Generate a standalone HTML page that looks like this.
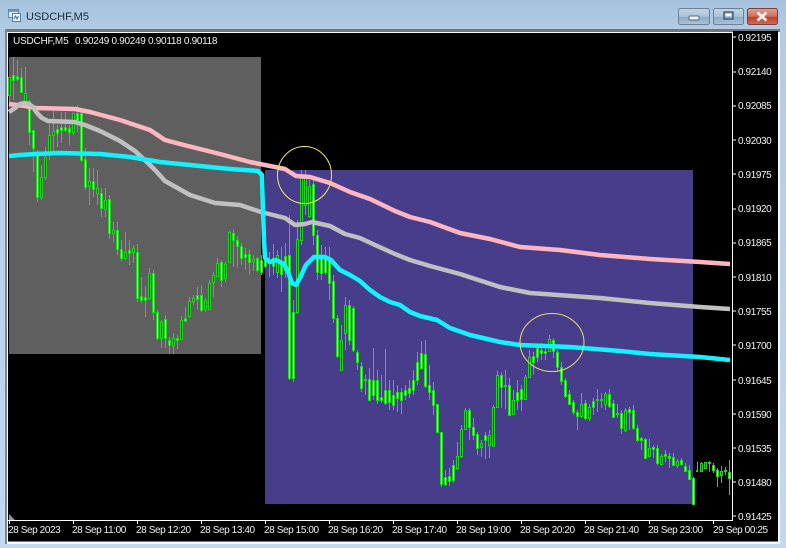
<!DOCTYPE html>
<html><head><meta charset="utf-8"><title>USDCHF,M5</title>
<style>
html,body{margin:0;padding:0;width:786px;height:548px;overflow:hidden;background:#bcd4ec}
svg{position:absolute;left:0;top:0;display:block}
text{font-family:"Liberation Sans",sans-serif}
</style></head><body>
<svg width="786" height="548" viewBox="0 0 786 548" xmlns="http://www.w3.org/2000/svg">
<defs>
<linearGradient id="bg" x1="0" y1="0" x2="0" y2="1"><stop offset="0" stop-color="#a5c2dd"/><stop offset=".06" stop-color="#b3cce4"/><stop offset="1" stop-color="#c2d9ef"/></linearGradient>
<linearGradient id="btn" x1="0" y1="0" x2="0" y2="1"><stop offset="0" stop-color="#c3d5e6"/><stop offset=".5" stop-color="#aac3da"/><stop offset=".55" stop-color="#8fabc6"/><stop offset="1" stop-color="#a9c3db"/></linearGradient>
<linearGradient id="cls" x1="0" y1="0" x2="0" y2="1"><stop offset="0" stop-color="#e0a193"/><stop offset=".5" stop-color="#cf6c59"/><stop offset=".55" stop-color="#bb3e2b"/><stop offset="1" stop-color="#cf6f5c"/></linearGradient>
</defs>
<rect width="786" height="548" fill="url(#bg)"/>
<!-- title icon -->
<g shape-rendering="crispEdges">
<rect x="8.500" y="9.500" width="10" height="8" fill="#dfeaf5" stroke="#5d88b5"/>
<rect x="12.500" y="13.500" width="8" height="8" fill="#f2f7fc" stroke="#4f7cab"/>
<rect x="9" y="10" width="9" height="2" fill="#6f9ac6"/>
</g>
<path d="M14 19l1.500-3 1.500 3 1.500-3" fill="none" stroke="#3a6c9f" stroke-width="1"/>
<text x="26" y="20" font-size="11" fill="#1c2a38">USDCHF,M5</text>
<!-- buttons -->
<rect x="678.500" y="8.500" width="31" height="16" rx="2" fill="url(#btn)" stroke="#6d8094"/>
<rect x="713.500" y="8.500" width="30" height="16" rx="2" fill="url(#btn)" stroke="#6d8094"/>
<rect x="747.500" y="8.500" width="30" height="16" rx="2" fill="url(#cls)" stroke="#7b4338"/>
<rect x="689" y="16" width="10" height="4" rx="1" fill="#f0f4f8" stroke="#54677b" stroke-width="1"/>
<rect x="724" y="12" width="9" height="7" fill="none" stroke="#3e5064" stroke-width="1.300"/>
<rect x="726" y="14" width="5" height="2" fill="#fff"/>
<path d="M757.500 12.500l9 8M766.500 12.500l-9 8" stroke="#f3f0ee" stroke-width="2.800" fill="none"/>
<!-- frame -->
<rect x="5" y="29" width="775" height="3" fill="#6d7883"/>
<rect x="5" y="29" width="2" height="515" fill="#7a8794"/>
<rect x="7" y="32" width="773" height="512" fill="#f4f7fb"/>
<rect x="8" y="33" width="770" height="508.500" fill="#000"/>
<rect x="733" y="31" width="45" height="2" fill="#000"/>
<rect x="7" y="32" width="726" height="1" fill="#fff"/>
<rect x="732" y="32" width="1" height="489" fill="#fff"/>
<rect x="8" y="520" width="725" height="1" fill="#fff"/>
<!-- zones -->
<rect x="9" y="57" width="252" height="297" fill="#5f5f5f"/>
<rect x="265" y="170" width="428" height="334" fill="#483d8b"/>
<path d="M9 514l6 6H9z" fill="#8d97a3"/>
<!-- candle wicks -->
<path shape-rendering="crispEdges" fill="none" stroke="#1cdc1c" d="M9.500 77V102M13.500 57V100M17.500 60V81M21.500 68V93M25.500 67V105M29.500 100V145M33.500 130V172M37.500 150V202M41.500 165V200M45.500 147V180M49.500 124V160M53.500 111V152M57.500 125V147M61.500 112V143M65.500 112V132M69.500 125V145M73.500 113V135M77.500 105V132M81.500 112V162M85.500 148V190M89.500 168V205M93.500 168V197M97.500 170V205M101.500 188V217M105.500 188V217M109.500 195V239M113.500 222V242M117.500 222V255M121.500 240V261M125.500 232V260M129.500 240V265M133.500 245V263M137.500 244V302M141.500 277V303M145.500 286V317M149.500 268V300M153.500 270V320M157.500 310V340M161.500 320V348M165.500 315V348M169.500 337V354M173.500 333V354M177.500 335V349M181.500 316V340M185.500 307V322M189.500 297V318M193.500 295V305M197.500 287V310M201.500 285V312M205.500 298V312M209.500 280V310M213.500 272V297M217.500 258V277M221.500 260V287M225.500 262V282M229.500 231V263M233.500 229V267M237.500 236V268M241.500 243V265M245.500 248V270M249.500 250V275M253.500 255V271M257.500 257V272M261.500 255V275M265.500 258V268M269.500 252V277M273.500 244V275M277.500 250V278M281.500 247V292M285.500 243V278M289.500 215V380M293.500 300V382M297.500 220V314M301.500 170V245M305.500 170V215M309.500 180V218M313.500 180V245M317.500 230V280M321.500 245V280M325.500 247V275M329.500 247V300M333.500 275V323M337.500 315V358M341.500 325V370M345.500 297V350M349.500 300V345M353.500 306V352M357.500 350V370M361.500 362V392M365.500 375V395M369.500 368V400M373.500 348V400M377.500 370V404M381.500 375V403M385.500 349V405M389.500 380V410M393.500 380V410M397.500 385V412M401.500 388V414M405.500 385V400M409.500 380V398M413.500 370V395M417.500 352V385M421.500 341V370M425.500 340V388M429.500 365V400M433.500 382V415M437.500 404V433M441.500 432V487M445.500 470V486M449.500 468V486M453.500 460V483M457.500 442V470M461.500 425V458M465.500 408V430M469.500 408V440M473.500 418V440M477.500 432V455M481.500 440V457M485.500 432V459M489.500 430V458M493.500 405V447M497.500 371V408M501.500 372V408M505.500 370V409M509.500 378V416M513.500 390V415M517.500 380V410M521.500 385V411M525.500 375V400M529.500 350V378M533.500 352V375M537.500 345V362M541.500 343V360M545.500 345V360M549.500 335V352M553.500 338V358M557.500 350V372M561.500 362V385M565.500 378V398M569.500 390V405M573.500 400V415M577.500 410V430M581.500 393V418M585.500 400V420M589.500 404V421M593.500 398V415M597.500 389V412M601.500 393V408M605.500 392V410M609.500 389V408M613.500 400V417M617.500 404V418M621.500 410V434M625.500 408V432M629.500 407V430M633.500 405V430M637.500 425V442M641.500 437V450M645.500 438V459M649.500 439V457M653.500 445V458M657.500 445V465M661.500 454V465M665.500 450V462M669.500 453V468M673.500 453V466M677.500 459V468M681.500 458V466M685.500 463V472M689.500 465V480M693.500 477V505M697.500 462V471M701.500 462V472M705.500 462V469M709.500 461V472M713.500 463V473M717.500 468V487M721.500 466V483M725.500 467V475M729.500 460V495"/>
<!-- dark bodies -->
<path shape-rendering="crispEdges" fill="#0f3a0f" stroke="#1cd81c" d="M8.500 77.500h2v18h-2zM24.500 93.500h2v9h-2zM40.500 177.500h2v20h-2zM44.500 157.500h2v20h-2zM48.500 135.500h2v17h-2zM52.500 131.500h2v4h-2zM72.500 113.500h2v19h-2zM88.500 181.500h2v5h-2zM96.500 188.500h2v5h-2zM104.500 200.500h2v9h-2zM112.500 230.500h2v3h-2zM124.500 252.500h2v6h-2zM132.500 248.500h2v4h-2zM148.500 273.500h2v25h-2zM160.500 322.500h2v16h-2zM172.500 338.500h2v7h-2zM180.500 320.500h2v19h-2zM188.500 301.500h2v15h-2zM192.500 298.500h2v3h-2zM204.500 300.500h2v9h-2zM208.500 283.500h2v26h-2zM212.500 275.500h2v7h-2zM216.500 263.500h2v13h-2zM224.500 264.500h2v14h-2zM228.500 232.500h2v30h-2zM252.500 259.500h2v2h-2zM276.500 255.500h2v17h-2zM296.500 239.500h2v73h-2zM300.500 178.500h2v62h-2zM304.500 178.500h2v27h-2zM308.500 186.500h2v30h-2zM340.500 340.500h2v30h-2zM344.500 305.500h2v28h-2zM364.500 379.500h2v1h-2zM456.500 456.500h2v12h-2zM460.500 429.500h2v27h-2zM464.500 410.500h2v19h-2zM480.500 443.500h2v4h-2zM488.500 435.500h2v10h-2zM492.500 407.500h2v39h-2zM496.500 375.500h2v32h-2zM512.500 400.500h2v14h-2zM524.500 377.500h2v22h-2zM528.500 357.500h2v20h-2zM548.500 339.500h2v12h-2zM580.500 404.500h2v12h-2zM588.500 407.500h2v11h-2zM604.500 394.500h2v10h-2zM624.500 410.500h2v20h-2zM648.500 448.500h2v8h-2zM660.500 456.500h2v8h-2zM676.500 461.500h2v4h-2zM700.500 463.500h2v8h-2zM704.500 462.500h2v6h-2zM720.500 471.500h2v4h-2z"/>
<!-- light bodies -->
<path shape-rendering="crispEdges" fill="#c4f8b4" stroke="#1cd81c" d="M12.500 75.500h2v5h-2zM16.500 76.500h2v3h-2zM20.500 77.500h2v15h-2zM28.500 101.500h2v31h-2zM32.500 130.500h2v18h-2zM36.500 155.500h2v42h-2zM56.500 129.500h2v4h-2zM60.500 127.500h2v3h-2zM64.500 127.500h2v3h-2zM68.500 128.500h2v4h-2zM76.500 113.500h2v7h-2zM80.500 113.500h2v47h-2zM84.500 159.500h2v28h-2zM92.500 181.500h2v8h-2zM100.500 193.500h2v15h-2zM108.500 199.500h2v34h-2zM116.500 230.500h2v19h-2zM120.500 249.500h2v9h-2zM128.500 250.500h2v3h-2zM136.500 252.500h2v46h-2zM140.500 296.500h2v4h-2zM144.500 297.500h2v3h-2zM152.500 273.500h2v39h-2zM156.500 312.500h2v26h-2zM164.500 319.500h2v19h-2zM168.500 340.500h2v5h-2zM176.500 338.500h2v2h-2zM184.500 318.500h2v3h-2zM196.500 295.500h2v4h-2zM200.500 295.500h2v15h-2zM220.500 262.500h2v18h-2zM232.500 233.500h2v7h-2zM236.500 240.500h2v6h-2zM240.500 246.500h2v12h-2zM244.500 254.500h2v3h-2zM248.500 254.500h2v8h-2zM256.500 258.500h2v12h-2zM260.500 260.500h2v12h-2zM264.500 260.500h2v6h-2zM268.500 260.500h2v3h-2zM272.500 258.500h2v8h-2zM280.500 262.500h2v12h-2zM284.500 256.500h2v14h-2zM288.500 255.500h2v123h-2zM292.500 312.500h2v66h-2zM312.500 184.500h2v51h-2zM316.500 235.500h2v37h-2zM320.500 258.500h2v15h-2zM324.500 258.500h2v14h-2zM328.500 258.500h2v25h-2zM332.500 281.500h2v37h-2zM336.500 318.500h2v38h-2zM348.500 305.500h2v35h-2zM352.500 308.500h2v42h-2zM356.500 352.500h2v10h-2zM360.500 366.500h2v22h-2zM368.500 379.500h2v21h-2zM372.500 380.500h2v15h-2zM376.500 380.500h2v20h-2zM380.500 397.500h2v3h-2zM384.500 390.500h2v13h-2zM388.500 390.500h2v12h-2zM392.500 395.500h2v10h-2zM396.500 392.500h2v6h-2zM400.500 392.500h2v8h-2zM404.500 390.500h2v5h-2zM408.500 388.500h2v5h-2zM412.500 380.500h2v10h-2zM416.500 362.500h2v18h-2zM420.500 353.500h2v15h-2zM424.500 354.500h2v32h-2zM428.500 385.500h2v7h-2zM432.500 390.500h2v15h-2zM436.500 404.500h2v28h-2zM440.500 432.500h2v52h-2zM444.500 477.500h2v7h-2zM448.500 476.500h2v5h-2zM452.500 465.500h2v15h-2zM468.500 410.500h2v17h-2zM472.500 427.500h2v8h-2zM476.500 434.500h2v14h-2zM484.500 435.500h2v5h-2zM500.500 375.500h2v12h-2zM504.500 385.500h2v1h-2zM508.500 385.500h2v30h-2zM516.500 392.500h2v8h-2zM520.500 389.500h2v10h-2zM532.500 356.500h2v6h-2zM536.500 348.500h2v9h-2zM540.500 350.500h2v3h-2zM544.500 351.500h2v2h-2zM552.500 340.500h2v11h-2zM556.500 352.500h2v15h-2zM560.500 367.500h2v14h-2zM564.500 380.500h2v16h-2zM568.500 394.500h2v10h-2zM572.500 402.500h2v10h-2zM576.500 412.500h2v4h-2zM584.500 403.500h2v15h-2zM592.500 401.500h2v6h-2zM596.500 399.500h2v1h-2zM600.500 399.500h2v1h-2zM608.500 394.500h2v12h-2zM612.500 403.500h2v14h-2zM616.500 413.500h2v1h-2zM620.500 413.500h2v15h-2zM628.500 409.500h2v3h-2zM632.500 410.500h2v18h-2zM636.500 428.500h2v12h-2zM640.500 438.500h2v2h-2zM644.500 439.500h2v19h-2zM652.500 447.500h2v2h-2zM656.500 448.500h2v15h-2zM664.500 454.500h2v2h-2zM668.500 456.500h2v2h-2zM672.500 457.500h2v8h-2zM680.500 460.500h2v4h-2zM684.500 466.500h2v5h-2zM688.500 470.500h2v9h-2zM692.500 478.500h2v26h-2zM696.500 470.500h1v1h-1zM708.500 462.500h2v1h-2zM712.500 465.500h2v5h-2zM716.500 470.500h2v6h-2zM724.500 470.500h2v1h-2zM728.500 472.500h2v6h-2z"/>
<!-- moving averages -->
<g fill="none" stroke-width="4.500" stroke-linejoin="round" stroke-linecap="butt">
<path stroke="#ffb6c1" d="M9 104L25 106L36 108L75 109L90 112L120 120L150 130L165 140L180 144L220 154L250 162L285 169L296 176L310 177L330 183L350 192L370 199L395 211L410 217L430 222L460 233L490 239L520 247L560 250L600 255L650 259L700 262L730 264"/>
<path stroke="#c0c0c0" d="M9 112L15 108L20 104L24 103L29 104L33 107L37 113L42 118L48 121L75 122L85 125L100 131L120 141L135 151L150 165L155 170L165 181L190 195L215 203L240 205L261 212L285 218L295 225L305 224L312 222L330 226L345 234L360 238L375 245L395 254L410 260L430 266L460 274L500 287L530 293L600 298L650 303L700 307L730 309"/>
<path stroke="#14f2ff" d="M9 156L20 155L35 154L60 153L100 154L130 157L160 162L190 165L230 169L258 171L262 175L263 210L264 240L265 258L270 262L276 260L284 264L288 272L292 283L296 285L300 278L306 265L314 257L325 257L331 260L340 270L350 275L360 281L370 290L380 297L390 302L400 305L410 312L420 316L437 320L450 328L470 335L500 342L520 345L570 347L620 351L650 354L700 357L730 360"/>
</g>
<ellipse cx="304.500" cy="175" rx="27" ry="28.500" fill="none" stroke="#f3e860" stroke-width="1"/>
<ellipse cx="552" cy="342.500" rx="32" ry="29" fill="none" stroke="#efdc62" stroke-width="1"/>
<!-- ticks -->
<path shape-rendering="crispEdges" stroke="#fff" fill="none" d="M733 37h3M733 72h3M733 106h3M733 140h3M733 174h3M733 209h3M733 243h3M733 277h3M733 311h3M733 345h3M733 380h3M733 414h3M733 448h3M733 482h3M733 516h3M9.500 521v3M73.500 521v3M137.500 521v3M201.500 521v3M265.500 521v3M329.500 521v3M393.500 521v3M457.500 521v3M521.500 521v3M585.500 521v3M649.500 521v3M713.500 521v3"/>
<g font-size="10" fill="#f2f2f2" style="letter-spacing:-.4px">
<text x="738" y="41">0.92195</text>
<text x="738" y="75">0.92140</text>
<text x="738" y="109">0.92085</text>
<text x="738" y="144">0.92030</text>
<text x="738" y="178">0.91975</text>
<text x="738" y="212">0.91920</text>
<text x="738" y="246">0.91865</text>
<text x="738" y="281">0.91810</text>
<text x="738" y="315">0.91755</text>
<text x="738" y="349">0.91700</text>
<text x="738" y="384">0.91645</text>
<text x="738" y="418">0.91590</text>
<text x="738" y="452">0.91535</text>
<text x="738" y="486">0.91480</text>
<text x="738" y="520">0.91425</text>
<text x="8" y="533">28 Sep 2023</text>
<text x="72" y="533">28 Sep 11:00</text>
<text x="136" y="533">28 Sep 12:20</text>
<text x="200" y="533">28 Sep 13:40</text>
<text x="264" y="533">28 Sep 15:00</text>
<text x="328" y="533">28 Sep 16:20</text>
<text x="392" y="533">28 Sep 17:40</text>
<text x="456" y="533">28 Sep 19:00</text>
<text x="520" y="533">28 Sep 20:20</text>
<text x="584" y="533">28 Sep 21:40</text>
<text x="648" y="533">28 Sep 23:00</text>
<text x="713" y="533">29 Sep 00:25</text>
<text x="13" y="44" style="letter-spacing:-.2px">USDCHF,M5</text>
<text x="75" y="44" style="letter-spacing:-.3px">0.90249 0.90249 0.90118 0.90118</text>
</g>
</svg>
</body></html>
